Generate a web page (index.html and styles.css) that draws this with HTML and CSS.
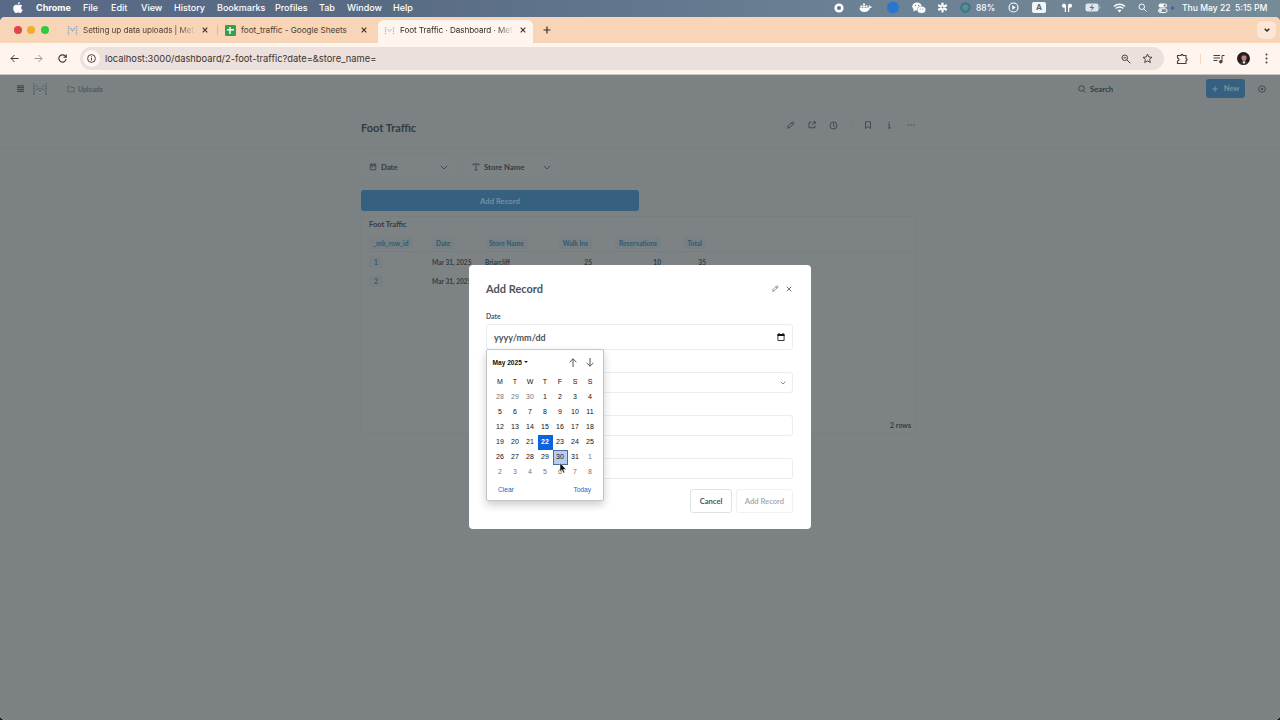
FILE: index.html
```
<!DOCTYPE html>
<html lang="en">
  <head>
    <meta charset="UTF-8" />
    <meta name="viewport" content="width=device-width, initial-scale=1.0" />
    <title>Foot Traffic · Dashboard · Metabase</title>
    <link rel="stylesheet" href="styles.css">
  </head>
  <body>
    <div class="menubar">
      <div class="menus">
        <svg class="apple" width="10" height="11" viewBox="0 0 20 22" fill="#fff"><path d="M14 0c0 3-2 5-4.500 5C9.300 2.500 11.500.400 14 0zM10 6.500c1 0 2.300-1.300 4.500-1.200 1.700.1 3.200 1 4 2.200-3.500 2.300-3 7 .900 8.500-1 2.800-3 6-5 6-1.700 0-2.300-1-4.200-1s-2.600 1-4.200 1C3.500 22 .5 17 .5 12.500c0-4.500 2.800-7.200 5.700-7.200 1.700 0 2.900 1.200 3.800 1.200z"/></svg>
        <b>Chrome</b>
        <span>File</span>
        <span>Edit</span>
        <span>View</span>
        <span>History</span>
        <span>Bookmarks</span>
        <span>Profiles</span>
        <span>Tab</span>
        <span>Window</span>
        <span>Help</span>
      </div>
      <div class="status">
        <i><svg width="10" height="10" viewBox="0 0 10 10"><circle cx="5" cy="5" r="4.600" fill="#fff"/><rect x="3.200" y="3.200" width="3.600" height="3.600" rx=".8" fill="#5d6f84"/></svg></i>
        <i><svg width="13" height="11" viewBox="0 0 26 22" fill="#fff"><path d="M1 11h18c1-1 1-3 0-5 2 0 3 2 3 3 1-.5 3 0 4 0-1 2-2 3-4 3-2 5-5 8-11 8C5 20 1 17 1 11z"/><path d="M3 7h4v3H3zM8 7h4v3H8zM13 7h4v3h-4zM8 3h4v3H8z"/></svg></i>
        <i><svg width="12" height="13" viewBox="0 0 12 13"><circle cx="6" cy="6.500" r="6" fill="#2a76cf"/></svg></i>
        <i><svg width="14" height="12" viewBox="0 0 28 24"><ellipse cx="10" cy="9" rx="9.500" ry="8" fill="#fff"/><path d="M3 14v5l5-3z" fill="#fff"/><ellipse cx="19" cy="15.500" rx="8.500" ry="7" fill="#fff" stroke="#6d8192"/><circle cx="7" cy="7" r="1.400" fill="#6d8192"/><circle cx="13" cy="7" r="1.400" fill="#6d8192"/><circle cx="16.500" cy="14" r="1.200" fill="#6d8192"/><circle cx="22" cy="14" r="1.200" fill="#6d8192"/></svg></i>
        <i><svg width="11" height="11" viewBox="0 0 22 22" stroke="#fff" stroke-width="4.500" stroke-linecap="round"><path d="M11 3v16M4 7l14 8M4 15l14-8"/><circle cx="11" cy="11" r="2" fill="#6d8192" stroke="none"/></svg></i>
        <i><svg width="11" height="11" viewBox="0 0 22 22" fill="none" stroke-width="3.500"><circle cx="11" cy="11" r="8.500" stroke="#3d6a76"/><path d="M11 2.500A8.500 8.500 0 1 1 4 6" stroke="#1c8a83"/></svg></i>
        <span class="percent">88%</span>
        <i><svg width="11" height="11" viewBox="0 0 22 22"><circle cx="11" cy="11" r="9" fill="none" stroke="#fff" stroke-width="2.200"/><path d="M8.500 6.500v9l7-4.500z" fill="#fff"/></svg></i>
        <i><span class="input-source">A</span></i>
        <i><svg width="12" height="10" viewBox="0 0 24 20" fill="#fff"><path d="M2 5c0-5 8-5 8 0v13H7.500V9C5 10 2 9 2 5zM22 5c0-5-8-5-8 0v13h2.500V9c2.500 1 5.500 0 5.500-4z"/></svg></i>
        <i><svg width="16" height="9" viewBox="0 0 32 18"><rect x="1" y="1" width="26" height="16" rx="4" fill="#dfe6ec"/><path d="M29 6v6c2-1 2-5 0-6z" fill="#c5d0d8"/><path d="M16 2l-7 8h5l-2 6 7-8h-5z" fill="#5d7488"/></svg></i>
        <i><svg width="13" height="10" viewBox="0 0 26 20" fill="none" stroke="#fff" stroke-width="2.800"><path d="M2 7c6-6 16-6 22 0M5.500 11c4-4 11-4 15 0"/><path d="M13 19l-4-4.500c2-2 6-2 8 0z" fill="#fff" stroke="none"/></svg></i>
        <i><svg width="9" height="9" viewBox="0 0 18 18" fill="none" stroke="#fff" stroke-width="2"><circle cx="7.500" cy="7.500" r="5.500"/><path d="M11.500 11.500L17 17"/></svg></i>
        <i><svg width="17" height="10" viewBox="0 0 34 20"><rect x="1" y="1" width="17" height="8" rx="4" fill="#fff"/><circle cx="13.500" cy="5" r="2.300" fill="#6d8192"/><rect x="1" y="11.500" width="17" height="7.500" rx="3.700" fill="none" stroke="#fff" stroke-width="2"/><circle cx="5" cy="15" r="2.500" fill="#fff"/><circle cx="29" cy="10" r="3.200" fill="#4450c8"/></svg></i>
        <span class="day">Thu May 22</span>
        <span class="time">5:15 PM</span>
      </div>
    </div>

    <div class="browser">
      <div class="tabs">
        <div class="lights"><i class="red"></i><i class="yellow"></i><i class="green"></i></div>
        <div class="tab tab-first">
          <svg width="11" height="11" viewBox="0 0 22 22" fill="none" stroke="#a4aab5" stroke-width="3"><path d="M3 2v18M19 2v18" stroke-dasharray="2.500 1.500"/><path d="M6 5l5 7 5-7" stroke-width="2.500"/></svg>
          <span class="tab-title fade">Setting up data uploads | Met</span>
          <svg class="close" width="6" height="6" viewBox="0 0 6 6"><path d="M.7.7l4.600 4.600M5.300.7L.7 5.300"/></svg>
        </div>
        <div class="tab tab-second">
          <svg width="11" height="11" viewBox="0 0 11 11"><rect width="11" height="11" rx="1.200" fill="#34a04e"/><path d="M5 2v7M2 4.700h7" stroke="#fff" stroke-width="1.400"/></svg>
          <span class="tab-title">foot_traffic - Google Sheets</span>
          <svg class="close" width="6" height="6" viewBox="0 0 6 6"><path d="M.7.7l4.600 4.600M5.300.7L.7 5.300"/></svg>
        </div>
        <div class="tab tab-active">
          <svg width="11" height="11" viewBox="0 0 22 22" fill="none" stroke="#a9b9df" stroke-width="2.500"><path d="M3 4v15M19 4v15" stroke-dasharray="2.500 1.500"/><path d="M7 8l4 5 4-5" stroke-width="2"/></svg>
          <span class="tab-title fade">Foot Traffic · Dashboard · Met</span>
          <svg class="close" width="6" height="6" viewBox="0 0 6 6"><path d="M.7.7l4.600 4.600M5.300.7L.7 5.300"/></svg>
        </div>
        <svg class="plus" width="8" height="8" viewBox="0 0 8 8"><path d="M4 .5v7M.5 4h7" stroke="#3b2f26" stroke-width="1.200"/></svg>
        <div class="tab-search"><svg width="6" height="4" viewBox="0 0 6 4"><path d="M.7.7L3 3 5.300.7" fill="none" stroke="#2b211a" stroke-width="1.300"/></svg></div>
      </div>

      <div class="toolbar">
        <div class="nav-buttons">
          <svg width="9" height="9" viewBox="0 0 18 18" fill="none" stroke="#41352f" stroke-width="2"><path d="M17 9H2M9 2L2 9l7 7"/></svg>
          <svg width="9" height="9" viewBox="0 0 18 18" fill="none" stroke="#a1958f" stroke-width="2"><path d="M1 9h15M9 2l7 7-7 7"/></svg>
          <svg width="9" height="9" viewBox="0 0 18 18" fill="none" stroke="#41352f" stroke-width="2.200"><path d="M15.500 5.500A7.300 7.300 0 1 0 16.300 10M16.500 1v5.500H11"/></svg>
        </div>
        <div class="omnibox">
          <span class="site-info"><svg width="9" height="9" viewBox="0 0 18 18" fill="none" stroke="#382d29" stroke-width="1.800"><circle cx="9" cy="9" r="7.800"/><path d="M9 8v5M9 4.700v2"/></svg></span>
          <span class="url">localhost:3000/dashboard/2-foot-traffic?date=&amp;store_name=</span>
          <svg width="10" height="10" viewBox="0 0 20 20" fill="none" stroke="#483d38" stroke-width="2"><circle cx="7.500" cy="7.500" r="5.500"/><path d="M11.500 11.500L18.500 18.500M5 7.500h5"/></svg>
          <svg width="11" height="11" viewBox="0 0 22 22" fill="none" stroke="#483d38" stroke-width="1.900"><path d="M11 2l2.600 6 6.400.6-4.900 4.200 1.500 6.300L11 15.800l-5.600 3.300 1.500-6.300L2 8.600 8.400 8z"/></svg>
        </div>
        <svg width="12" height="12" viewBox="0 0 24 24" fill="none" stroke="#483d38" stroke-width="2.200"><path d="M3 5h7c0-3.500 4-3.500 4 0h6v6c3 0 3 4 0 4v6H3v-5c4 0 4-6 0-6z"/></svg>
        <span class="bar-divider"></span>
        <svg width="12" height="10" viewBox="0 0 24 20" fill="none" stroke="#483d38" stroke-width="2"><path d="M1 3h13M1 8h13M1 13h8"/><path d="M18 15V3h5"/><circle cx="15.500" cy="15.500" r="2.500" fill="#483d38"/></svg>
        <svg class="avatar" width="13" height="13" viewBox="0 0 26 26"><circle cx="13" cy="13" r="13" fill="#211b21"/><path d="M4 22c2-5 16-5 18 0-4 5-14 5-18 0z" fill="#3a3039"/><ellipse cx="14" cy="11" rx="5" ry="7" fill="#b98378"/><path d="M8 9c0-7 12-7 12 0-3-3-9-3-12 0z" fill="#2b2022"/><path d="M11 20l3-2 3 2-3 4z" fill="#eee"/></svg>
        <svg class="more" width="3" height="11" viewBox="0 0 3 11" fill="#483d38"><circle cx="1.500" cy="1.500" r="1"/><circle cx="1.500" cy="5.500" r="1"/><circle cx="1.500" cy="9.500" r="1"/></svg>
      </div>

      <div class="page">
        <header class="app-bar">
          <svg width="7" height="7" viewBox="0 0 7 7" stroke="#42494e" stroke-width="1.200"><path d="M0 .9h7M0 2.700h7M0 4.500h7M0 6.300h7"/></svg>
          <svg class="logo" width="14" height="12" viewBox="0 0 14 12" stroke="#435362" stroke-width="1.300" fill="none"><path d="M1 .5v11M13 .5v11" stroke-dasharray="1.300 1.100"/><path d="M3.100 3h1.300M9.600 3h1.300M5.100 5.400h1.300M7.800 5.400h1.300M6.400 7.600h1.300M3.100 6.500h1.300M9.800 6.500h1.300" stroke-width="1.200"/></svg>
          <svg width="8" height="8" viewBox="0 0 16 16" fill="none" stroke="#505860" stroke-width="1.500"><path d="M1.500 13.500v-11H6l2 2.500h6.500v8.500z"/></svg>
          <span class="crumb">Uploads</span>
          <div class="app-search">
            <svg width="8" height="8" viewBox="0 0 16 16" fill="none" stroke="#394046" stroke-width="1.800"><circle cx="7" cy="7" r="5.500"/><path d="M11 11l4 4"/></svg>
            <span>Search</span>
          </div>
          <div class="new-button"><svg width="6" height="6" viewBox="0 0 6 6"><path d="M3 0v6M0 3h6" stroke="#7894a6" stroke-width=".9"/></svg><span>New</span></div>
          <svg width="8" height="8" viewBox="0 0 16 16" fill="none" stroke="#394046" stroke-width="1.600"><path d="M8 1l2.200 1.600L13 3l.9 2.600L15 8l-1.100 2.400L13 13l-2.800.4L8 15l-2.200-1.600L3 13l-.9-2.600L1 8l1.100-2.400L3 3l2.800-.4z"/><circle cx="8" cy="8" r="1.500" fill="#394046"/></svg>
        </header>

        <div class="dash-header">
          <h1>Foot Traffic</h1>
          <div class="dash-actions">
            <i><svg width="8" height="8" viewBox="0 0 16 16"><path d="M1.500 14.500l1-4.500 8-8c1-1 4 2 3 3l-8 8zM9 4l3 3"/></svg></i>
            <i><svg width="8" height="8" viewBox="0 0 16 16"><path d="M7 2.500H2v11h12V9M10 1.500h4.500V6M14 2L8 8"/></svg></i>
            <i><svg width="9" height="9" viewBox="0 0 18 18"><circle cx="9" cy="9" r="7"/><path d="M9 4.500V9l3.500 2"/></svg></i>
            <i><span class="action-divider"></span></i>
            <i><svg width="8" height="8" viewBox="0 0 16 16"><path d="M3 15V1.500h10V15l-5-4z"/></svg></i>
            <i><svg width="4" height="8" viewBox="0 0 8 16"><path d="M2 7h2.500v7M1 14h6.500M4 2v2.200"/></svg></i>
            <i><svg width="8" height="2" viewBox="0 0 16 4"><path d="M1 2h3M6.500 2h3M12 2h3"/></svg></i>
          </div>
        </div>

        <main class="dashboard">
          <div class="filters">
            <div class="filter">
              <svg width="8" height="8" viewBox="0 0 16 16"><path d="M2.500 2.500h11v11h-11zM2.500 5.500h11M5 1v2M11 1v2M5 8.500h3"/></svg>
              <span>Date</span>
              <svg width="8" height="5" viewBox="0 0 16 10"><path d="M1.500 1.500L8 8l6.500-6.500"/></svg>
            </div>
            <div class="filter">
              <svg width="8" height="8" viewBox="0 0 16 16"><path d="M2 5V2h12v3M8 2v12M5 14h6"/></svg>
              <span>Store Name</span>
              <svg width="8" height="5" viewBox="0 0 16 10"><path d="M1.500 1.500L8 8l6.500-6.500"/></svg>
            </div>
          </div>
          <div class="add-button">Add Record</div>
          <section class="card">
            <h2>Foot Traffic</h2>
            <div class="row head">
              <span><b>_mb_row_id</b></span>
              <span><b>Date</b></span>
              <span><b>Store Name</b></span>
              <span class="num"><b>Walk Ins</b></span>
              <span class="num"><b>Reservations</b></span>
              <span class="num"><b>Total</b></span>
            </div>
            <div class="row">
              <span><b class="id">1</b></span>
              <span>Mar 31, 2025</span>
              <span>Briarcliff</span>
              <span class="num">25</span>
              <span class="num">10</span>
              <span class="num">35</span>
            </div>
            <div class="row">
              <span><b class="id">2</b></span>
              <span>Mar 31, 2025</span>
            </div>
            <div class="card-footer">2 rows</div>
          </section>
        </main>
      </div>
    </div>

    <div class="modal">
      <div class="modal-header">
        <h3>Add Record</h3>
        <svg width="7" height="7" viewBox="0 0 16 16" fill="none" stroke="#74797f" stroke-width="1.800"><path d="M1.500 14.500l1-4.500 8-8c1-1 4 2 3 3l-8 8zM9 4l3 3"/></svg>
        <svg width="6" height="6" viewBox="0 0 6 6" stroke="#74797f" stroke-width="1"><path d="M.7.7l4.600 4.600M5.300.7L.7 5.300"/></svg>
      </div>
      <label>Date</label>
      <div class="field date-field">
        <span>yyyy/mm/dd</span>
        <svg width="8" height="8" viewBox="0 0 8 8"><path d="M.9 1.500h6.200v6H.9z" fill="none" stroke="#222" stroke-width=".9"/><path d="M.5 1h7v2h-7zM1.500 0h1v1h-1zM5.500 0h1v1h-1z" fill="#111"/></svg>
      </div>
      <div class="field select-field"><svg width="6" height="4" viewBox="0 0 6 4"><path d="M.7.7L3 3 5.300.7" fill="none" stroke="#777d83" stroke-width=".9"/></svg></div>
      <div class="field"></div>
      <div class="field"></div>
      <div class="modal-buttons">
        <div class="button">Cancel</div>
        <div class="button disabled">Add Record</div>
      </div>

      <div class="picker">
        <div class="picker-header">
          <b>May 2025</b><i class="caret"></i>
          <svg width="8" height="9" viewBox="0 0 8 9"><path d="M4 9V.8M.6 4.200L4 .8l3.400 3.400"/></svg>
          <svg width="8" height="9" viewBox="0 0 8 9"><path d="M4 0v8.200M.6 4.800L4 8.200l3.400-3.400"/></svg>
        </div>
        <div class="days" id="days">
          <span>M</span><span>T</span><span>W</span><span>T</span><span>F</span><span>S</span><span>S</span>
        </div>
        <div class="picker-footer"><span>Clear</span><span>Today</span></div>
        <svg class="cursor" width="8" height="12" viewBox="0 0 8 12"><path d="M1 .8v9l2-1.900 1.400 3.200 1.400-.6-1.400-3.100h2.800z" fill="#111" stroke="#fff" stroke-width=".5"/></svg>
      </div>
    </div>

    <script>
      // Six weeks, starting on Monday April 28
      const days = document.getElementById("days");
      for (let i = 0; i < 42; i++) {
        const date = new Date(2025, 3, 28 + i);
        const cell = document.createElement("span");
        cell.textContent = date.getDate();
        if (date.getMonth() !== 4) {
          cell.classList.add("other");
        } else if (date.getDate() === 22) {
          cell.classList.add("today");
        } else if (date.getDate() === 30) {
          cell.classList.add("hover");
        }
        days.appendChild(cell);
      }
    </script>
  </body>
</html>
```
FILE: styles.css
```
* {
  box-sizing: border-box;
}
body {
  margin: 0;
  width: 1280px;
  height: 720px;
  overflow: hidden;
  position: relative;
  background: #14181c;
  font-family: Lato, sans-serif;
  white-space: nowrap;
}
svg {
  display: block;
  flex: none;
}
i {
  font-style: normal;
}

/* macOS menu bar */
.menubar {
  height: 20px;
  padding-bottom: 5px;
  display: flex;
  justify-content: space-between;
  background: linear-gradient(90deg, #586a86, #586b84 30%, #6a8094 65%, #758b98);
  color: #fff;
  font-family: Inter, sans-serif;
  font-size: 9px;
  font-weight: 500;
}
.menus {
  display: grid;
  grid-template-columns: 23px 47px 28px 30px 33px 43px 58px 44px 28px 46px 30px;
  align-items: center;
  padding-left: 13px;
}
.menus b {
  font-weight: 700;
}
.status {
  display: grid;
  grid-template-columns: 27px 27px 28px 23px 25px 21px 24px 26px 26px 30px 22px 30px 17px 31px 53px 45px;
  align-items: center;
}
.status i {
  display: flex;
  justify-content: center;
}
.percent {
  font-size: 8.500px;
}
.day,
.time {
  font-size: 8.600px;
}
.input-source {
  width: 14px;
  height: 11px;
  border-radius: 2px;
  background: #f2f5f8;
  color: #55697a;
  font-size: 8px;
  font-weight: 700;
  line-height: 11px;
  text-align: center;
}

/* Browser window */
.browser {
  height: 703px;
  margin-top: -3px;
  border-radius: 5px;
  overflow: hidden;
  background: #fff5ef;
}
.tabs {
  height: 26px;
  display: flex;
  align-items: center;
  background: #f7d5b6;
  font-family: Inter, sans-serif;
  font-size: 8.150px;
  color: #4d3f33;
}
.lights {
  display: flex;
  gap: 5.300px;
  padding-left: 14px;
  width: 67px;
}
.lights i {
  width: 8px;
  height: 8px;
  border-radius: 50%;
}
.red {
  background: #e0454b;
}
.yellow {
  background: #eeae2c;
}
.green {
  background: #2ecb42;
}
.tab {
  display: flex;
  align-items: center;
}
.tab-title {
  margin-left: 5px;
  flex: 1;
}
.tab-first {
  width: 151px;
  padding-right: 9px;
  border-right: 1px solid #e9b98d;
  height: 10px;
}
.tab-first .tab-title {
  margin-right: 4px;
  letter-spacing: -0.060px;
}
.tab-second {
  width: 160px;
  padding: 0 11px 0 7px;
}
.tab-active {
  width: 155px;
  height: 23px;
  align-self: flex-end;
  padding: 0 7px 3px 6px;
  border-radius: 6px 6px 0 0;
  background: #fff5ef;
  color: #332a25;
}
.tab-active .tab-title {
  margin-right: 4px;
  letter-spacing: -0.060px;
}
.fade {
  -webkit-mask-image: linear-gradient(90deg, #000 84%, transparent 98%);
  mask-image: linear-gradient(90deg, #000 84%, transparent 98%);
}
.close {
  stroke: #3b2f26;
  stroke-width: 1.100;
}
.plus {
  margin-left: 10px;
}
.tab-search {
  width: 19px;
  height: 18px;
  margin: 0 4px 0 auto;
  border-radius: 6px;
  background: #fce7d6;
  display: flex;
  align-items: center;
  justify-content: center;
}
.toolbar {
  height: 32px;
  display: flex;
  align-items: center;
  gap: 12px;
  padding-left: 10px;
  border-bottom: 1px solid #cbc3c1;
}
.nav-buttons {
  width: 58px;
  display: flex;
  gap: 15px;
}
.omnibox {
  width: 1084px;
  height: 23px;
  flex: none;
  padding: 0 11px 0 3px;
  border-radius: 12px;
  background: #ebe0db;
  display: flex;
  align-items: center;
  gap: 11px;
}
.site-info {
  width: 17px;
  height: 17px;
  border-radius: 50%;
  background: #fdf6f2;
  display: flex;
  align-items: center;
  justify-content: center;
}
.url {
  flex: 1;
  margin-left: -6px;
  font-family: Inter, sans-serif;
  font-size: 9.350px;
  color: #3d332f;
}
.bar-divider {
  width: 1px;
  height: 10px;
  background: #f3d6bd;
}
.more {
  margin-left: 3px;
}

/* Dimmed application */
.page {
  height: 645px;
  background: #7c8283;
  color: #343b42;
  font-weight: 700;
}
.app-bar {
  height: 27px;
  display: flex;
  align-items: center;
  padding: 0 14px 0 17px;
}
.logo {
  margin: 0 20px 0 9px;
}
.crumb {
  flex: 1;
  margin-left: 3px;
  font-size: 6.800px;
  color: #50585f;
}
.app-search {
  width: 128px;
  display: flex;
  gap: 4px;
  align-items: center;
  font-size: 7.700px;
}
.new-button {
  width: 39px;
  height: 19px;
  margin-right: 13px;
  border-radius: 3px;
  background: #35607f;
  color: #7894a6;
  font-size: 7.500px;
  display: flex;
  align-items: center;
  justify-content: center;
  gap: 6px;
}
.dash-header {
  height: 46px;
  padding: 0 360px 0 361px;
  display: flex;
  justify-content: space-between;
  border-bottom: 1px solid #787e80;
}
h1 {
  margin: 18px 0 0;
  font-size: 11px;
  line-height: 16px;
}
.dash-actions {
  display: grid;
  grid-template-columns: 21px 21px 22px 16px 16px 26px 18px;
  height: 46px;
  align-items: center;
}
.dash-actions i {
  display: flex;
  justify-content: center;
}
.dash-actions svg,
.filter svg {
  fill: none;
  stroke: #394047;
  stroke-width: 1.700;
}
.action-divider {
  width: 1px;
  height: 8px;
  background: #767c7e;
}
.dashboard {
  padding: 9px 364px 0 361px;
}
.filters {
  display: flex;
  gap: 8px;
}
.filter {
  width: 95px;
  height: 20px;
  padding: 0 7px;
  border-radius: 3px;
  border: 1px solid #7e8485;
  background: #7d8384;
  font-size: 7.700px;
  display: flex;
  align-items: center;
}
.filter span {
  flex: 1;
  margin-left: 4px;
}
.add-button {
  width: 278px;
  height: 21px;
  margin-top: 13px;
  border-radius: 3px;
  background: #35607f;
  color: #7591a4;
  font-size: 7.700px;
  line-height: 22px;
  text-align: center;
}
.card {
  height: 217px;
  margin-top: 5px;
  padding: 3px 0 0 7px;
  border: 1px solid #797f81;
  border-radius: 3px;
  background: #7d8384;
  display: flex;
  flex-direction: column;
}
h2 {
  margin: 0;
  font-size: 7.500px;
  line-height: 9px;
}
.row {
  height: 19.500px;
  display: grid;
  grid-template-columns: 63px 53px 61px 46px 69px 45px;
  align-items: center;
  font-size: 6.600px;
}
.head {
  height: 18px;
  margin-top: 5px;
  border-bottom: 1px solid #787e80;
}
.row b {
  padding: 2px 4px;
  border-radius: 3px;
  background: #788084;
  color: #365d73;
}
.row .id {
  padding: 2px 5px;
}
.num {
  text-align: right;
}
.card-footer {
  margin: auto 4px 3px 0;
  font-size: 7px;
  text-align: right;
}

/* Add record dialog */
.modal {
  position: absolute;
  left: 469px;
  top: 265px;
  width: 342px;
  height: 264px;
  padding: 0 18px 0 17px;
  border-radius: 4px;
  background: #fff;
  color: #4c5460;
  font-weight: 700;
}
.modal-header {
  height: 47px;
  padding-right: 1px;
  display: flex;
  align-items: center;
  gap: 7px;
}
h3 {
  flex: 1;
  margin: 0;
  font-size: 11px;
}
.modal label {
  display: block;
  height: 12px;
  font-size: 6.800px;
  line-height: 9px;
}
.field {
  height: 21px;
  margin-bottom: 22px;
  border: 1px solid #ebecee;
  border-radius: 3px;
  display: flex;
  align-items: center;
}
.date-field {
  height: 26px;
  padding: 0 7px;
  justify-content: space-between;
  font-size: 9px;
}
.select-field {
  justify-content: flex-end;
  padding-right: 6px;
}
.modal-buttons {
  display: flex;
  justify-content: flex-end;
  gap: 4px;
  margin-top: -12px;
}
.button {
  width: 42px;
  height: 24px;
  border: 1px solid #dfe1e4;
  border-radius: 3px;
  font-size: 7.600px;
  line-height: 23px;
  text-align: center;
}
.disabled {
  width: 57px;
  border-color: #f0f1f2;
  color: #a9adb3;
}

/* Native date picker */
.picker {
  position: absolute;
  left: 17px;
  top: 84px;
  width: 118px;
  height: 152px;
  border: 1px solid #c4c6c8;
  border-radius: 2px;
  background: #fff;
  box-shadow: 0 4px 9px rgba(0, 0, 0, 0.2);
  color: #111;
  font-family: "Liberation Sans", sans-serif;
  font-size: 7px;
  font-weight: 400;
}
.picker-header {
  height: 24.500px;
  display: flex;
  align-items: center;
  padding: 0 9px 0 5.500px;
}
.picker-header b {
  font-size: 6.600px;
}
.caret {
  margin: 0 auto 0 2px;
  border: 2px solid transparent;
  border-top-color: #222;
  border-bottom: 0;
}
.picker-header svg {
  margin-left: 9px;
  fill: none;
  stroke: #444;
  stroke-width: 0.900;
}
.days {
  display: grid;
  grid-template-columns: repeat(7, 15px);
  grid-auto-rows: 15px;
  padding-left: 5.500px;
  text-align: center;
  line-height: 14px;
}
.other {
  color: #777;
}
.today {
  background: #0b63dd;
  color: #fff;
  font-weight: 700;
}
.hover {
  border: 1px solid #4d6b94;
  background: #b4cdf0;
  line-height: 12px;
}
.picker-footer {
  display: flex;
  justify-content: space-between;
  padding: 6px 12px 0 11px;
  color: #0070c8;
  font-size: 6.600px;
}
.cursor {
  position: absolute;
  left: 72px;
  top: 112px;
}
```
